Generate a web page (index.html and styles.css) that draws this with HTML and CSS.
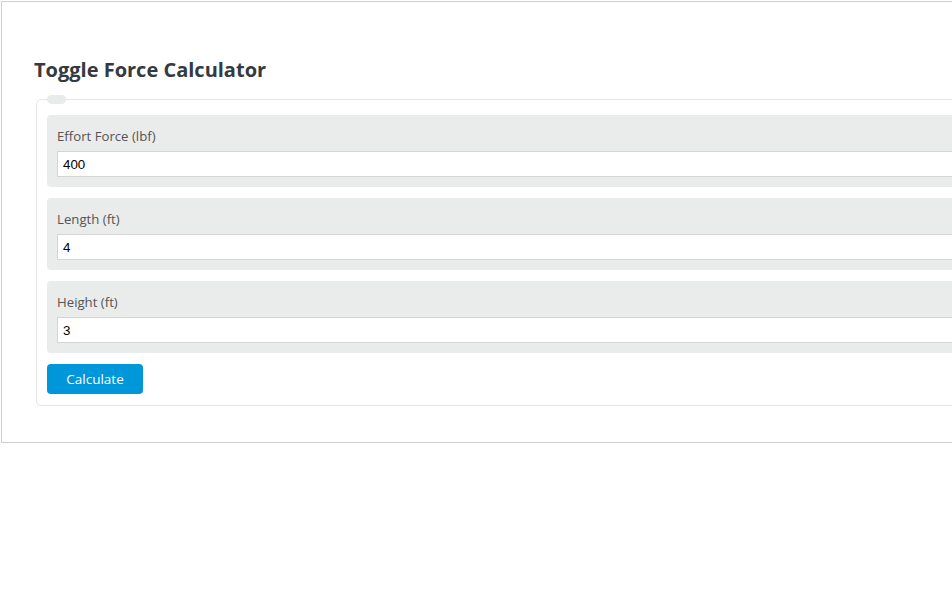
FILE: index.html
```html
<!DOCTYPE html>
<html lang="en">
<head>
<meta charset="utf-8">
<title>Toggle Force Calculator</title>
<link rel="stylesheet" href="styles.css">
</head>
<body>
<div class="wrap">
  <h2 class="title">Toggle Force Calculator</h2>
  <form class="calc" onsubmit="return false;">
    <fieldset class="box">
      <legend class="pill"></legend>
      <div class="group">
        <label class="lbl" for="f1">Effort Force (lbf)</label>
        <input class="inp" id="f1" type="text" value="400">
      </div>
      <div class="group">
        <label class="lbl" for="f2">Length (ft)</label>
        <input class="inp" id="f2" type="text" value="4">
      </div>
      <div class="group">
        <label class="lbl" for="f3">Height (ft)</label>
        <input class="inp" id="f3" type="text" value="3">
      </div>
      <button class="btn" type="button">Calculate</button>
    </fieldset>
  </form>
</div>
</body>
</html>
```

FILE: styles.css
```css
html, body {
  margin: 0;
  padding: 0;
  overflow: hidden;
  background: #fff;
}
body {
  font-family: "Open Sans", "Noto Sans", sans-serif;
  color: #333;
}
.wrap {
  margin: 1px 0 0 1px;
  width: 1200px;
  border: 1px solid #cfcfcf;
  padding: 54px 0 36px 34px;
}
.title {
  margin: 0 0 11px -2px;
  font-size: 20px;
  line-height: 28px;
  font-weight: 700;
  color: #343a40;
}
.calc {
  margin: 0;
}
.box {
  margin: 0;
  border: 1px solid #e6e6e6;
  border-radius: 5px;
  padding: 0 10px 11px 10px;
  display: flex;
  flex-direction: column;
  gap: 11px;
  min-width: 0;
}
.pill {
  padding: 0;
  width: 19px;
  height: 9px;
  background: #e9eaea;
  border-radius: 5px;
  margin: 0 0 11px 0;
}
.group {
  background: #eaebeb;
  border-radius: 4px;
  padding: 10px;
  display: flex;
  flex-direction: column;
}
.lbl {
  font-size: 13.2px;
  line-height: 20px;
  color: #555;
  margin: 1px 0 5px 0;
}
.inp {
  box-sizing: border-box;
  height: 26px;
  width: 100%;
  border: 1px solid #d4d4d4;
  background: #fff;
  padding: 0 5px;
  font-family: "Liberation Sans", Arial, sans-serif;
  font-size: 13.33px;
  color: #000;
  outline: none;
}
.btn {
  align-self: flex-start;
  width: 96px;
  height: 30px;
  border: 0;
  border-radius: 4px;
  background: #0096da;
  color: #fff;
  font-family: "Open Sans", "Noto Sans", sans-serif;
  font-size: 13.5px;
  padding: 0;
  cursor: pointer;
}
```
